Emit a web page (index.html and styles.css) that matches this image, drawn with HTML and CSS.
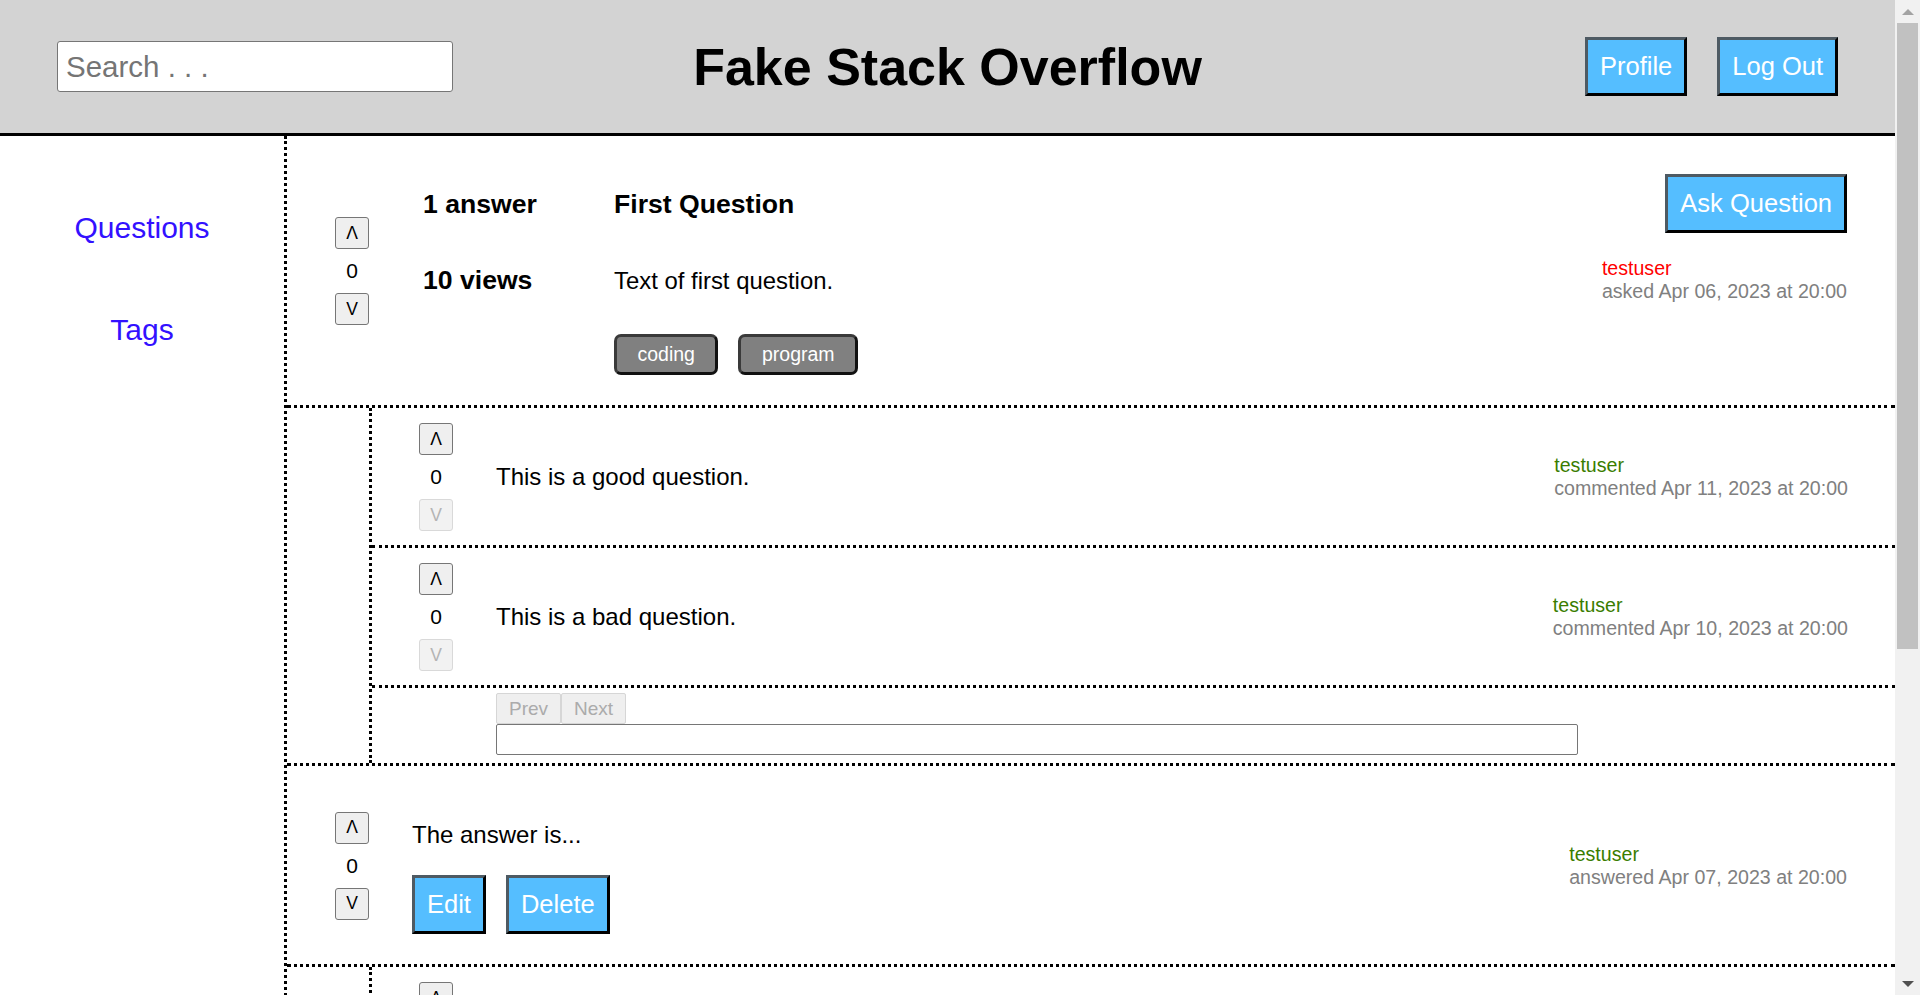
FILE: index.html
```html
<!DOCTYPE html>
<html lang="en">
<head>
<meta charset="utf-8">
<title>Fake Stack Overflow</title>
<link rel="stylesheet" href="styles.css">
</head>
<body>
<div class="page">
<header class="topbar">
  <input class="search" type="text" placeholder="Search . . .">
  <h1 class="site-title">Fake Stack Overflow</h1>
  <div class="top-actions">
    <button class="btn">Profile</button>
    <button class="btn">Log Out</button>
  </div>
</header>
<div class="layout">
  <nav class="sidebar">
    <a class="nav-link" href="#">Questions</a>
    <a class="nav-link" href="#">Tags</a>
  </nav>
  <main class="main">
    <section class="question">
      <div class="votes">
        <button class="vote-btn">Λ</button>
        <div class="count">0</div>
        <button class="vote-btn">V</button>
      </div>
      <div class="q-stats">
        <div class="stat stat-first">1 answer</div>
        <div class="stat stat-second">10 views</div>
      </div>
      <div class="q-body">
        <div class="q-title">First Question</div>
        <div class="q-text">Text of first question.</div>
        <div class="tags">
          <button class="tag">coding</button>
          <button class="tag">program</button>
        </div>
      </div>
      <div class="q-side">
        <button class="btn">Ask Question</button>
        <div class="meta q-meta">
          <div class="user red">testuser</div>
          <div class="date">asked Apr 06, 2023 at 20:00</div>
        </div>
      </div>
    </section>

    <section class="comments">
      <div class="comment-list">
        <div class="comment">
          <div class="votes">
            <button class="vote-btn">Λ</button>
            <div class="count">0</div>
            <button class="vote-btn" disabled>V</button>
          </div>
          <div class="c-text">This is a good question.</div>
          <div class="meta">
            <div class="user green">testuser</div>
            <div class="date">commented Apr 11, 2023 at 20:00</div>
          </div>
        </div>
        <div class="comment">
          <div class="votes">
            <button class="vote-btn">Λ</button>
            <div class="count">0</div>
            <button class="vote-btn" disabled>V</button>
          </div>
          <div class="c-text">This is a bad question.</div>
          <div class="meta">
            <div class="user green">testuser</div>
            <div class="date">commented Apr 10, 2023 at 20:00</div>
          </div>
        </div>
        <div class="pager">
          <div class="pager-btns">
            <button class="pg-btn" disabled>Prev</button>
            <button class="pg-btn" disabled>Next</button>
          </div>
          <input class="comment-input" type="text">
        </div>
      </div>
    </section>

    <section class="answer">
      <div class="votes">
        <button class="vote-btn">Λ</button>
        <div class="count">0</div>
        <button class="vote-btn">V</button>
      </div>
      <div class="a-body">
        <div class="a-text">The answer is...</div>
        <div class="a-actions">
          <button class="btn">Edit</button>
          <button class="btn">Delete</button>
        </div>
      </div>
      <div class="meta">
        <div class="user green">testuser</div>
        <div class="date">answered Apr 07, 2023 at 20:00</div>
      </div>
    </section>

    <section class="comments">
      <div class="comment-list">
        <div class="comment">
          <div class="votes">
            <button class="vote-btn">Λ</button>
            <div class="count">0</div>
            <button class="vote-btn" disabled>V</button>
          </div>
          <div class="c-text">This is a good answer.</div>
          <div class="meta">
            <div class="user green">testuser</div>
            <div class="date">commented Apr 09, 2023 at 20:00</div>
          </div>
        </div>
        <div class="comment">
          <div class="votes">
            <button class="vote-btn">Λ</button>
            <div class="count">0</div>
            <button class="vote-btn" disabled>V</button>
          </div>
          <div class="c-text">This is a bad answer.</div>
          <div class="meta">
            <div class="user green">testuser</div>
            <div class="date">commented Apr 08, 2023 at 20:00</div>
          </div>
        </div>
        <div class="pager">
          <div class="pager-btns">
            <button class="pg-btn" disabled>Prev</button>
            <button class="pg-btn" disabled>Next</button>
          </div>
          <input class="comment-input" type="text">
        </div>
      </div>
    </section>
    <div class="main-end"></div>
  </main>
</div>
</div>
<div class="scrollbar" aria-hidden="true">
  <div class="sb-arrow"><span class="tri-up"></span></div>
  <div class="sb-track"><div class="sb-thumb"></div></div>
  <div class="sb-arrow"><span class="tri-down"></span></div>
</div>
</body>
</html>
```

FILE: styles.css
```css
* {
  box-sizing: border-box;
}

body {
  margin: 0;
  display: flex;
  align-items: flex-start;
  font-family: "Liberation Sans", Arial, sans-serif;
  color: #000;
  background: #fff;
}

.page {
  flex: 1;
  min-width: 0;
}

/* ---------- fake scrollbar ---------- */
.scrollbar {
  flex: none;
  width: 25px;
  height: 100vh;
  background: #f1f1f1;
  display: flex;
  flex-direction: column;
}
.sb-arrow {
  height: 23px;
  display: flex;
  align-items: center;
  justify-content: center;
}
.tri-up {
  width: 0;
  height: 0;
  border-left: 6px solid transparent;
  border-right: 6px solid transparent;
  border-bottom: 6px solid #a3a3a3;
}
.tri-down {
  width: 0;
  height: 0;
  border-left: 6px solid transparent;
  border-right: 6px solid transparent;
  border-top: 6px solid #505050;
}
.sb-track {
  flex: 1;
  padding: 0 2px 0 2px;
}
.sb-thumb {
  height: 626px;
  background: #c1c1c1;
}

/* ---------- header ---------- */
.topbar {
  display: grid;
  grid-template-columns: 1fr auto 1fr;
  align-items: center;
  height: 136px;
  padding: 0 57px;
  background: #d3d3d3;
  border-bottom: 3px solid #000;
}

.search {
  justify-self: start;
  width: 396px;
  height: 51px;
  padding: 0 8px;
  font-family: "Liberation Sans", Arial, sans-serif;
  font-size: 29.5px;
  border: 1px solid #767676;
  border-radius: 3px;
  background: #fff;
  color: #000;
}
.search::placeholder {
  color: #757575;
}

.site-title {
  margin: 0;
  font-size: 52px;
  font-weight: bold;
  line-height: normal;
}

.top-actions {
  justify-self: end;
  display: flex;
  gap: 30px;
}

.btn {
  font-family: "Liberation Sans", Arial, sans-serif;
  font-size: 25.5px;
  line-height: normal;
  color: #fff;
  background: #55beff;
  padding: 12px 12px;
  border: 3px solid;
  border-color: #4e5a63 #000 #000 #4e5a63;
  border-radius: 0;
}

/* ---------- layout ---------- */
.layout {
  display: flex;
}

.sidebar {
  flex: none;
  width: 287px;
  border-right: 3px dotted #000;
  display: flex;
  flex-direction: column;
  align-items: center;
  padding-top: 75px;
  gap: 68px;
}

.nav-link {
  font-size: 30px;
  line-height: normal;
  color: #3311ff;
  text-decoration: none;
}

.main {
  flex: 1;
  min-width: 0;
}

.main-end {
  height: 150px;
}

/* ---------- votes ---------- */
.votes {
  flex: none;
  width: 34px;
  display: flex;
  flex-direction: column;
  align-items: center;
}

.vote-btn {
  width: 34px;
  height: 32px;
  padding: 0;
  font-family: "Liberation Sans", Arial, sans-serif;
  font-size: 17.5px;
  color: #000;
  background: #efefef;
  border: 1px solid #767676;
  border-radius: 3px;
}
.vote-btn:disabled {
  color: #b4b4b4;
  background: #f2f2f2;
  border-color: #d9d9d9;
}

.count {
  font-size: 21px;
  line-height: 24px;
  margin: 10px 0;
}

/* ---------- question ---------- */
.question {
  display: flex;
  align-items: flex-start;
  padding: 0 48px 30px 48px;
  border-bottom: 3px dotted #000;
}
.question .votes {
  margin-top: 81px;
}

.q-stats {
  flex: none;
  width: 191px;
  margin-left: 54px;
  font-size: 26.6px;
  font-weight: bold;
  line-height: normal;
}
.stat-first {
  margin-top: 53px;
}
.stat-second {
  margin-top: 45px;
}

.q-body {
  flex: 1;
}
.q-title {
  margin-top: 53px;
  font-size: 26.6px;
  font-weight: bold;
  line-height: normal;
}
.q-text {
  margin-top: 47px;
  font-size: 23.9px;
  line-height: normal;
}

.tags {
  display: flex;
  gap: 20px;
  margin-top: 39px;
}
.tag {
  font-family: "Liberation Sans", Arial, sans-serif;
  font-size: 19.5px;
  line-height: normal;
  color: #fff;
  background: #808080;
  padding: 6px 20.5px;
  border: 3px solid;
  border-color: #3a3a3a #111 #111 #3a3a3a;
  border-radius: 7px;
}

.q-side {
  margin-top: 38px;
  display: flex;
  flex-direction: column;
  align-items: flex-end;
}
.q-meta {
  margin-top: 24px;
}

/* ---------- meta ---------- */
.meta {
  flex: none;
  font-size: 19.6px;
  line-height: normal;
}
.user.red {
  color: #ff0000;
}
.user.green {
  color: #3a7d00;
}
.date {
  color: #808080;
}

/* ---------- comments ---------- */
.comments {
  padding-left: 82px;
  border-bottom: 3px dotted #000;
}
.comment-list {
  border-left: 3px dotted #000;
}
.comment {
  display: flex;
  align-items: center;
  padding: 15px 47px 14px 47px;
  border-bottom: 3px dotted #000;
}
.c-text {
  flex: 1;
  margin-left: 43px;
  font-size: 24px;
  line-height: normal;
}

.pager {
  padding: 5px 0 8px 124px;
}
.pager-btns {
  display: flex;
}
.pg-btn {
  height: 31px;
  padding: 0 12px;
  font-family: "Liberation Sans", Arial, sans-serif;
  font-size: 19px;
  color: #ababab;
  background: #efefef;
  border: 1px solid #d6d6d6;
  border-radius: 2px;
}
.comment-input {
  display: block;
  width: 1082px;
  height: 31px;
  border: 1px solid #767676;
  border-radius: 2px;
  background: #fff;
}

/* ---------- answer ---------- */
.answer {
  display: flex;
  align-items: center;
  padding: 31px 48px 30px 48px;
  border-bottom: 3px dotted #000;
}
.a-body {
  flex: 1;
  margin-left: 43px;
}
.a-text {
  margin-top: 24px;
  font-size: 24px;
  line-height: normal;
}
.a-actions {
  display: flex;
  gap: 20px;
  margin-top: 26px;
}
```
